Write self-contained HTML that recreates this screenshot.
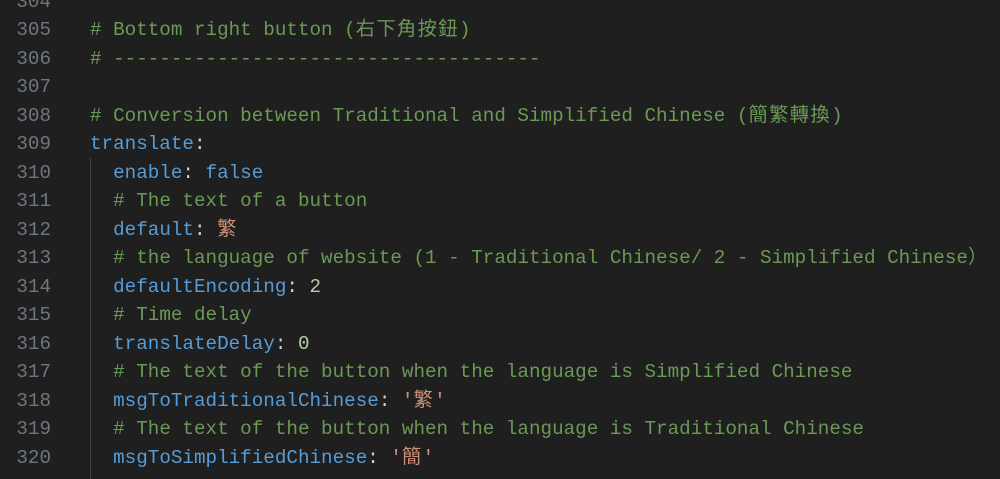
<!DOCTYPE html>
<html><head><meta charset="utf-8"><style>
html,body{margin:0;padding:0;background:#1f1f1f;width:1000px;height:479px;overflow:hidden}
.w{position:absolute;top:-12.5px;left:0;font-family:"Liberation Mono","Noto Sans CJK TC",monospace;font-size:19.25px}
.l{height:28.53px;line-height:28.53px;white-space:pre;position:relative}
.n{position:absolute;left:0;width:51px;text-align:right;color:#6e7681}
.c{position:absolute;left:90px;color:#d4d4d4}
.k{color:#569cd6}.m{color:#6a9955}.s{color:#ce9178}.u{color:#b5cea8}
.j{letter-spacing:1.4px}
.g{position:absolute;left:90px;top:158px;width:1px;height:321px;background:#404040}
</style></head><body>
<div class="g"></div>
<div class="w">
<div class="l"><span class="n">304</span></div>
<div class="l"><span class="n">305</span><span class="c m"># Bottom right button (<span class="j">右下角按鈕</span>)</span></div>
<div class="l"><span class="n">306</span><span class="c m"># -------------------------------------</span></div>
<div class="l"><span class="n">307</span></div>
<div class="l"><span class="n">308</span><span class="c m"># Conversion between Traditional and Simplified Chinese (<span class="j">簡繁轉換</span>)</span></div>
<div class="l"><span class="n">309</span><span class="c"><span class="k">translate</span>:</span></div>
<div class="l"><span class="n">310</span><span class="c">  <span class="k">enable</span>: <span class="k">false</span></span></div>
<div class="l"><span class="n">311</span><span class="c">  <span class="m"># The text of a button</span></span></div>
<div class="l"><span class="n">312</span><span class="c">  <span class="k">default</span>: <span class="s j">繁</span></span></div>
<div class="l"><span class="n">313</span><span class="c">  <span class="m"># the language of website (1 - Traditional Chinese/ 2 - Simplified Chinese<span style="letter-spacing:10px">）</span></span></span></div>
<div class="l"><span class="n">314</span><span class="c">  <span class="k">defaultEncoding</span>: <span class="u">2</span></span></div>
<div class="l"><span class="n">315</span><span class="c">  <span class="m"># Time delay</span></span></div>
<div class="l"><span class="n">316</span><span class="c">  <span class="k">translateDelay</span>: <span class="u">0</span></span></div>
<div class="l"><span class="n">317</span><span class="c">  <span class="m"># The text of the button when the language is Simplified Chinese</span></span></div>
<div class="l"><span class="n">318</span><span class="c">  <span class="k">msgToTraditionalChinese</span>: <span class="s">'<span class="j">繁</span>'</span></span></div>
<div class="l"><span class="n">319</span><span class="c">  <span class="m"># The text of the button when the language is Traditional Chinese</span></span></div>
<div class="l"><span class="n">320</span><span class="c">  <span class="k">msgToSimplifiedChinese</span>: <span class="s">'<span class="j">簡</span>'</span></span></div>
</div>
</body></html>
